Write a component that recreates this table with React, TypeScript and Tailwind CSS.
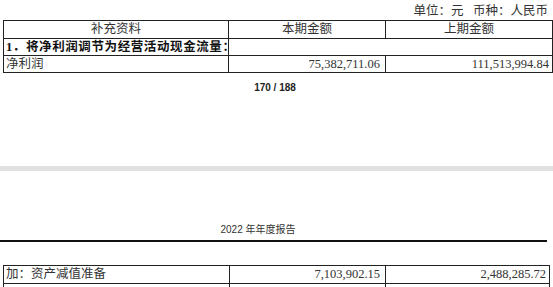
const serif = "font-['Liberation_Serif','Noto_Sans_CJK_SC',serif]"

function Cell({ children, className = '' }: { children?: React.ReactNode; className?: string }) {
  return (
    <td className={`border border-[#222] px-[2px] h-[17px] leading-[15px] p-0 ${className}`}>{children}</td>
  )
}

export default function App() {
  return (
    <div className={`w-[553px] h-[287px] bg-white overflow-hidden text-[#333] ${serif}`}>
      {/* clipped heading from previous page line */}
      <div className="h-[3px] overflow-hidden">
        <div className="-mt-[13px] pl-[20px] text-[12.5px] leading-[15px] text-[#d4d4d4]">七、现金流量表补充资料</div>
      </div>

      <div className="h-[17px] flex justify-end pr-[5px] text-[12.5px] leading-[16px]">
        单位：元&nbsp;&nbsp;&nbsp;币种：人民币
      </div>

      <table className="ml-[3px] border-collapse table-fixed w-[549px] text-[12.5px]">
        <colgroup>
          <col className="w-[225px]" />
          <col className="w-[157px]" />
          <col className="w-[167px]" />
        </colgroup>
        <tbody>
          <tr>
            <Cell className="text-center h-[18px]">补充资料</Cell>
            <Cell className="text-center">本期金额</Cell>
            <Cell className="text-center">上期金额</Cell>
          </tr>
          <tr>
            <Cell className="font-bold text-[#111]">
              <span className="whitespace-nowrap tracking-[0.6px]">1．将净利润调节为经营活动现金流量：</span>
            </Cell>
            <td colSpan={2} className="border-y border-r border-[#222] p-0" />
          </tr>
          <tr>
            <Cell>净利润</Cell>
            <Cell className="text-right pr-[5px]">75,382,711.06</Cell>
            <Cell className="text-right pr-[3px]">111,513,994.84</Cell>
          </tr>
        </tbody>
      </table>

      <div className="mt-[8px] text-center font-['Liberation_Sans','Noto_Sans_CJK_SC',sans-serif] font-bold text-[10px] leading-[14px] ml-[1px] w-[548px] text-[#222]">
        170 / 188
      </div>

      <div className="h-[71px]" />
      <div className="h-[5px] bg-[#e1e1e1]" />
      <div className="h-[52px]" />

      <div className="text-center w-[516px] text-[10px] leading-[14px] text-[#333] font-['Liberation_Sans','Noto_Sans_CJK_SC',sans-serif]">
        2022 年年度报告
      </div>
      <div className="mt-[3px] h-[2px] w-[547px] bg-[#111]" />

      <table className="mt-[23px] ml-[3px] border-collapse table-fixed w-[546px] text-[12.5px]">
        <colgroup>
          <col className="w-[226px]" />
          <col className="w-[156px]" />
          <col className="w-[164px]" />
        </colgroup>
        <tbody>
          <tr>
            <Cell className="h-[18px]">加：资产减值准备</Cell>
            <Cell className="text-right pr-[5px]">7,103,902.15</Cell>
            <Cell className="text-right pr-[3px]">2,488,285.72</Cell>
          </tr>
          <tr>
            <Cell>&nbsp;</Cell>
            <Cell />
            <Cell />
          </tr>
        </tbody>
      </table>
    </div>
  )
}
